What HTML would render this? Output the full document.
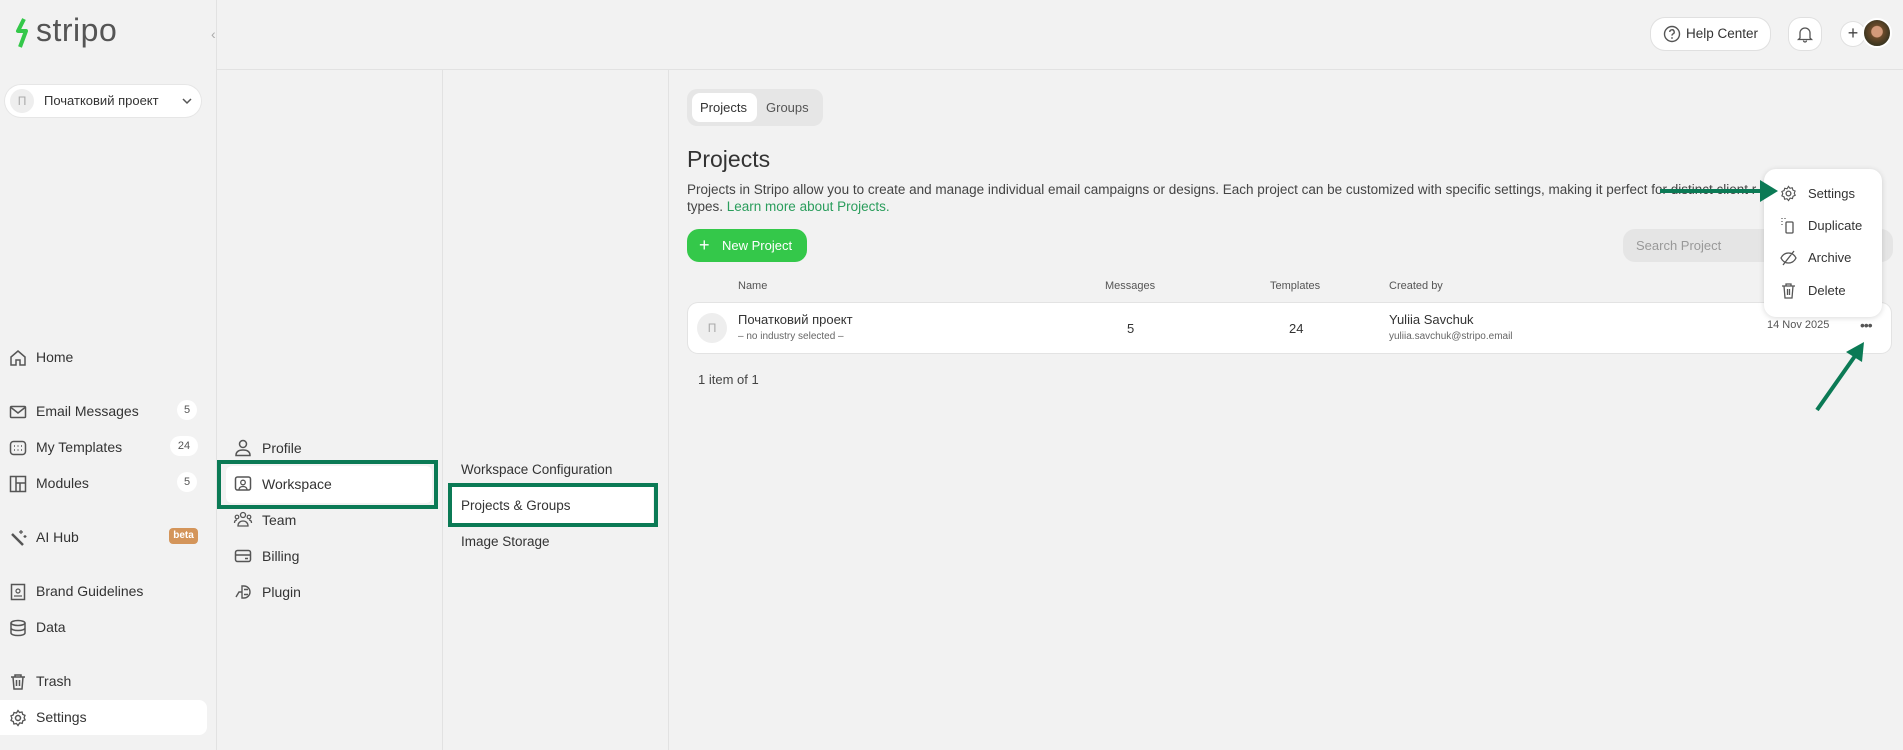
<!DOCTYPE html>
<html><head><meta charset="utf-8">
<style>
*{box-sizing:border-box;margin:0;padding:0}
body{width:1903px;height:750px;background:#f2f2f2;font-family:"Liberation Sans","Noto Sans CJK SC",sans-serif;color:#333;position:relative;overflow:hidden;font-size:14px}
.a{position:absolute}
.line-v{position:absolute;top:69px;bottom:0;width:1px;background:#e2e2e2}
.nav{position:absolute;left:36px;font-size:14px;color:#333}
.ic{position:absolute;width:18px;height:18px}
.badge{position:absolute;background:#fff;border-radius:10px;font-size:11px;color:#555;text-align:center;height:20px;line-height:20px}
svg{overflow:visible}
.gbox{position:absolute;border:4px solid #0b7a55}
</style></head><body>
<div class="a" style="left:216px;right:0;top:69px;height:1px;background:#e2e2e2"></div>
<div class="a" style="left:216px;top:0;width:1px;height:750px;background:#e2e2e2"></div>
<div class="line-v" style="left:442px"></div>
<div class="line-v" style="left:668px"></div>

<svg class="a" style="left:14px;top:17px" width="22" height="32" viewBox="0 0 22 32"><path d="M10 2 L4 14 L12 14 L6 30" stroke="#34c84a" stroke-width="4" fill="none" stroke-linejoin="round"/></svg>
<div class="a" style="left:36px;top:12px;font-size:32px;color:#555;letter-spacing:0.5px">stripo</div>
<div class="a" style="left:211px;top:26px;color:#aaa;font-size:14px">‹</div>

<div class="a" style="left:5px;top:85px;width:196px;height:32px;background:#fff;border-radius:16px;box-shadow:0 0 0 1px #e6e6e6"></div>
<div class="a" style="left:10px;top:89px;width:24px;height:24px;border-radius:12px;background:#eee;color:#aaa;font-size:12px;text-align:center;line-height:24px">П</div>
<div class="a" style="left:44px;top:93px;font-size:13px;color:#333">Початковий проект</div>
<svg class="a" style="left:182px;top:97px" width="10" height="8"><path d="M1 2 L5 6 L9 2" stroke="#555" stroke-width="1.5" fill="none"/></svg>

<svg class="ic" style="left:9px;top:349px" viewBox="0 0 18 18"><path d="M2 16V8L9 2L16 8V16H11V11H7V16Z" stroke="#555" stroke-width="1.5" fill="none"/></svg>
<div class="nav" style="top:349px">Home</div>
<svg class="ic" style="left:9px;top:403px" viewBox="0 0 18 18"><rect x="1.5" y="3.5" width="15" height="11" stroke="#555" stroke-width="1.5" fill="none" rx="1"/><path d="M2 4.5L9 10L16 4.5" stroke="#555" stroke-width="1.5" fill="none"/></svg>
<div class="nav" style="top:403px">Email Messages</div>
<div class="badge" style="left:177px;top:400px;width:20px">5</div>
<svg class="ic" style="left:9px;top:439px" viewBox="0 0 18 18"><rect x="1.5" y="2.5" width="15" height="13" rx="3" stroke="#555" stroke-width="1.5" fill="none"/><path d="M5 7h1M8.5 7h1M12 7h1M5 11h1M8.5 11h1M12 11h1" stroke="#555" stroke-width="1.5"/></svg>
<div class="nav" style="top:439px">My Templates</div>
<div class="badge" style="left:170px;top:436px;width:28px">24</div>
<svg class="ic" style="left:9px;top:475px" viewBox="0 0 18 18"><rect x="1.5" y="1.5" width="15" height="15" stroke="#555" stroke-width="1.5" fill="none"/><path d="M7 1.5V16.5M7 8H16.5M11 8V16.5" stroke="#555" stroke-width="1.5"/></svg>
<div class="nav" style="top:475px">Modules</div>
<div class="badge" style="left:177px;top:472px;width:20px">5</div>
<svg class="ic" style="left:9px;top:529px" viewBox="0 0 18 18"><path d="M3 5L14 16" stroke="#555" stroke-width="2.5"/><path d="M12 1v4M10 3h4M16 6v3M14.5 7.5h3" stroke="#555" stroke-width="1.2"/></svg>
<div class="nav" style="top:529px">AI Hub</div>
<div class="a" style="left:169px;top:528px;width:29px;height:16px;background:#d4955a;border-radius:4px;color:#fff;font-size:10px;font-weight:bold;text-align:center;line-height:16px">beta</div>
<svg class="ic" style="left:9px;top:583px" viewBox="0 0 18 18"><rect x="2.5" y="1.5" width="13" height="15" stroke="#555" stroke-width="1.5" fill="none"/><circle cx="9" cy="8" r="2" stroke="#555" stroke-width="1.2" fill="none"/><path d="M5 13h8" stroke="#555" stroke-width="1.2"/></svg>
<div class="nav" style="top:583px">Brand Guidelines</div>
<svg class="ic" style="left:9px;top:619px" viewBox="0 0 18 18"><ellipse cx="9" cy="4" rx="7" ry="2.5" stroke="#555" stroke-width="1.5" fill="none"/><path d="M2 4v10c0 1.4 3 2.5 7 2.5s7-1.1 7-2.5V4M2 9c0 1.4 3 2.5 7 2.5s7-1.1 7-2.5" stroke="#555" stroke-width="1.5" fill="none"/></svg>
<div class="nav" style="top:619px">Data</div>
<svg class="ic" style="left:9px;top:673px" viewBox="0 0 18 18"><path d="M2 4h14M6 4V2h6v2M4 4l1 12h8l1-12M7.5 7v6M10.5 7v6" stroke="#555" stroke-width="1.5" fill="none"/></svg>
<div class="nav" style="top:673px">Trash</div>
<div class="a" style="left:0;top:700px;width:207px;height:35px;background:#fff;border-radius:0 8px 8px 0"></div>
<svg class="ic" style="left:9px;top:709px" viewBox="0 0 18 18"><circle cx="9" cy="9" r="2.5" stroke="#555" stroke-width="1.5" fill="none"/><path d="M9 1.5l1.5 2 2.5-.5.7 2.4 2.3 1-.9 2.3 1 2.2-2.3 1-.6 2.5-2.5-.5L9 16.5l-1.6-2-2.5.5-.6-2.5-2.3-1 .9-2.3-.9-2.3 2.3-1 .7-2.4 2.5.5z" stroke="#555" stroke-width="1.3" fill="none"/></svg>
<div class="nav" style="top:709px">Settings</div>

<svg class="ic" style="left:234px;top:439px" viewBox="0 0 18 18"><circle cx="9" cy="5" r="3.5" stroke="#555" stroke-width="1.5" fill="none"/><path d="M2 16.5c0-4 3-5.5 7-5.5s7 1.5 7 5.5z" stroke="#555" stroke-width="1.5" fill="none"/></svg>
<div class="nav" style="left:262px;top:440px">Profile</div>
<div class="a" style="left:226px;top:466px;width:206px;height:37px;background:#fff;border-radius:6px"></div>
<div class="gbox" style="left:217px;top:460px;width:221px;height:49px"></div>
<svg class="ic" style="left:234px;top:475px" viewBox="0 0 18 18"><rect x="1.5" y="2" width="15" height="13" rx="2" stroke="#555" stroke-width="1.5" fill="none"/><circle cx="9" cy="7.5" r="2.3" stroke="#555" stroke-width="1.3" fill="none"/><path d="M5 15c0-2.5 2-3.5 4-3.5s4 1 4 3.5" stroke="#555" stroke-width="1.3" fill="none"/></svg>
<div class="nav" style="left:262px;top:476px">Workspace</div>
<svg class="ic" style="left:234px;top:511px" viewBox="0 0 18 18"><circle cx="9" cy="4" r="2.5" stroke="#555" stroke-width="1.3" fill="none"/><circle cx="3" cy="6" r="1.8" stroke="#555" stroke-width="1.2" fill="none"/><circle cx="15" cy="6" r="1.8" stroke="#555" stroke-width="1.2" fill="none"/><path d="M4 15c0-3 2-5 5-5s5 2 5 5zM0.5 12c0-2 1-3 2.5-3M17.5 12c0-2-1-3-2.5-3" stroke="#555" stroke-width="1.3" fill="none"/></svg>
<div class="nav" style="left:262px;top:512px">Team</div>
<svg class="ic" style="left:234px;top:547px" viewBox="0 0 18 18"><rect x="1.5" y="3.5" width="15" height="11" rx="2" stroke="#555" stroke-width="1.5" fill="none"/><path d="M1.5 8h15M11 11.5h3" stroke="#555" stroke-width="1.5"/></svg>
<div class="nav" style="left:262px;top:548px">Billing</div>
<svg class="ic" style="left:234px;top:583px" viewBox="0 0 18 18"><path d="M8 3h2a4 4 0 0 1 0 12H8zM10 6.5h4M10 11.5h4M8 9H5l-3 5" stroke="#555" stroke-width="1.4" fill="none"/></svg>
<div class="nav" style="left:262px;top:584px">Plugin</div>

<div class="nav" style="left:461px;top:462px;font-size:13.5px">Workspace Configuration</div>
<div class="a" style="left:452px;top:487px;width:201px;height:36px;background:#fff"></div>
<div class="gbox" style="left:448px;top:483px;width:210px;height:44px"></div>
<div class="nav" style="left:461px;top:498px;font-size:13.5px">Projects &amp; Groups</div>
<div class="nav" style="left:461px;top:534px;font-size:13.5px">Image Storage</div>

<div class="a" style="left:1651px;top:18px;width:119px;height:32px;background:#fff;border-radius:14px;box-shadow:0 0 0 1px #e0e0e0"></div>
<svg class="a" style="left:1663px;top:25px" width="18" height="18"><circle cx="9" cy="9" r="7.5" stroke="#555" stroke-width="1.4" fill="none"/><path d="M6.8 7a2.2 2.2 0 1 1 3 2c-.7.3-.8.8-.8 1.6" stroke="#555" stroke-width="1.4" fill="none"/><circle cx="9" cy="13" r=".9" fill="#555"/></svg>
<div class="a" style="left:1686px;top:26px;font-size:13.5px;color:#333">Help Center</div>
<div class="a" style="left:1789px;top:18px;width:32px;height:32px;background:#fff;border-radius:12px;box-shadow:0 0 0 1px #e0e0e0"></div>
<svg class="a" style="left:1797px;top:25px" width="16" height="18"><path d="M3 13V8a5 5 0 0 1 10 0v5l1.5 1.5h-13zM6.5 15.5a1.5 1.5 0 0 0 3 0" stroke="#555" stroke-width="1.3" fill="none"/></svg>
<div class="a" style="left:1841px;top:22px;width:24px;height:24px;background:#fff;border-radius:12px;box-shadow:0 0 0 1px #e0e0e0;text-align:center;line-height:23px;font-size:18px;color:#444">+</div>
<div class="a" style="left:1862px;top:18px;width:30px;height:30px;border-radius:15px;background:radial-gradient(circle at 50% 45%,#d49a7a 0 28%,#6b4a2a 32%,#3b3520 70%);border:2px solid #fff"></div>

<div class="a" style="left:687px;top:89px;width:136px;height:37px;background:#e6e6e6;border-radius:10px"></div>
<div class="a" style="left:692px;top:93px;width:65px;height:29px;background:#fff;border-radius:8px"></div>
<div class="a" style="left:700px;top:100px;font-size:13px;color:#333">Projects</div>
<div class="a" style="left:766px;top:100px;font-size:13px;color:#555">Groups</div>

<div class="a" style="left:687px;top:146px;font-size:23px;color:#333">Projects</div>
<div class="a" style="left:687px;top:181px;font-size:13.5px;color:#444;line-height:17px;width:1100px">Projects in Stripo allow you to create and manage individual email campaigns or designs. Each project can be customized with specific settings, making it perfect for distinct client r<br>types. <span style="color:#2a9d5c">Learn more about Projects.</span></div>

<div class="a" style="left:687px;top:229px;width:120px;height:33px;background:#34c84a;border-radius:12px"></div>
<div class="a" style="left:699px;top:235px;font-size:18px;color:#fff">+</div>
<div class="a" style="left:722px;top:238px;font-size:13px;color:#fff">New Project</div>

<div class="a" style="left:1623px;top:229px;width:270px;height:33px;background:#e5e5e5;border-radius:12px"></div>
<div class="a" style="left:1636px;top:238px;font-size:13px;color:#999">Search Project</div>

<div class="a" style="left:738px;top:280px;font-size:11px;color:#555">Name</div>
<div class="a" style="left:1105px;top:280px;font-size:11px;color:#555">Messages</div>
<div class="a" style="left:1270px;top:280px;font-size:11px;color:#555">Templates</div>
<div class="a" style="left:1389px;top:280px;font-size:11px;color:#555">Created by</div>

<div class="a" style="left:688px;top:303px;width:1203px;height:50px;background:#fff;border-radius:10px;box-shadow:0 0 0 1px #e3e3e3"></div>
<div class="a" style="left:697px;top:313px;width:30px;height:30px;border-radius:15px;background:#eee;color:#aaa;font-size:12px;text-align:center;line-height:30px">П</div>
<div class="a" style="left:738px;top:312px;font-size:13px;color:#333">Початковий проект</div>
<div class="a" style="left:738px;top:331px;font-size:10px;color:#666">– no industry selected –</div>
<div class="a" style="left:1127px;top:321px;font-size:13px;color:#333">5</div>
<div class="a" style="left:1289px;top:321px;font-size:13px;color:#333">24</div>
<div class="a" style="left:1389px;top:312px;font-size:13px;color:#333">Yuliia Savchuk</div>
<div class="a" style="left:1389px;top:331px;font-size:10px;color:#666">yuliia.savchuk@stripo.email</div>
<div class="a" style="left:1767px;top:319px;font-size:11px;color:#555">14 Nov 2025</div>
<div class="a" style="left:1860px;top:317px;font-size:14px;color:#555;letter-spacing:-1px">•••</div>

<div class="a" style="left:698px;top:372px;font-size:13px;color:#444">1 item of 1</div>

<div class="a" style="left:1764px;top:169px;width:118px;height:148px;background:#fff;border-radius:12px;box-shadow:0 1px 6px rgba(0,0,0,.15)"></div>
<svg class="a" style="left:1780px;top:185px" width="17" height="17" viewBox="0 0 18 18"><circle cx="9" cy="9" r="2.5" stroke="#555" stroke-width="1.4" fill="none"/><path d="M9 1.5l1.5 2 2.5-.5.7 2.4 2.3 1-.9 2.3 1 2.2-2.3 1-.6 2.5-2.5-.5L9 16.5l-1.6-2-2.5.5-.6-2.5-2.3-1 .9-2.3-.9-2.3 2.3-1 .7-2.4 2.5.5z" stroke="#555" stroke-width="1.2" fill="none"/></svg>
<div class="a" style="left:1808px;top:186px;font-size:13px;color:#333">Settings</div>
<svg class="a" style="left:1780px;top:217px" width="17" height="17"><path d="M2 1v1M2 4v1M2 7v1M5 1v1" stroke="#555" stroke-width="1.2"/><rect x="6" y="5" width="7" height="11" rx="1" stroke="#555" stroke-width="1.3" fill="none"/></svg>
<div class="a" style="left:1808px;top:218px;font-size:13px;color:#333">Duplicate</div>
<svg class="a" style="left:1780px;top:249px" width="17" height="17"><path d="M1 9c2-4 5-5 7.5-5s5.5 1 7.5 5c-2 4-5 5-7.5 5S3 13 1 9zM3 16L14 2" stroke="#555" stroke-width="1.3" fill="none"/></svg>
<div class="a" style="left:1808px;top:250px;font-size:13px;color:#333">Archive</div>
<svg class="a" style="left:1780px;top:282px" width="17" height="17"><path d="M2 4h13M6 4V2h5v2M4 4l1 12h7l1-12M7.5 7v6M9.5 7v6" stroke="#555" stroke-width="1.3" fill="none"/></svg>
<div class="a" style="left:1808px;top:283px;font-size:13px;color:#333">Delete</div>

<svg class="a" style="left:0;top:0" width="1903" height="750">
<line x1="1660" y1="191" x2="1762" y2="191" stroke="#0b7a55" stroke-width="4"/>
<polygon points="1760,180 1778,191 1760,202" fill="#0b7a55"/>
<line x1="1817" y1="410" x2="1855" y2="356" stroke="#0b7a55" stroke-width="4"/>
<polygon points="1846,352 1864,342 1862,362" fill="#0b7a55"/>
</svg>
</body></html>
